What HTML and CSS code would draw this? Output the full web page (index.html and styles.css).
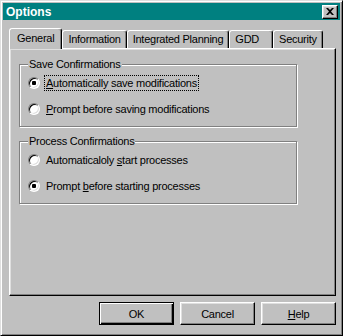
FILE: index.html
```html
<!DOCTYPE html>
<html lang="en">
<head>
  <meta charset="UTF-8" />
  <title>Options</title>
  <link rel="stylesheet" href="styles.css">
</head>
<body>

  <div class="window">
    <div class="titlebar">
      <span class="title">Options</span>
      <button class="close-btn" title="Close">
        <svg width="8" height="7" viewBox="0 0 8 7">
          <path d="M0 0h2l2 2 2-2h2L5 3.5 8 7H6L4 5 2 7H0l3-3.5z" fill="#000"/>
        </svg>
      </button>
    </div>

    <div class="dialog">
      <div class="tabs">
        <div class="tab active">General</div>
        <div class="tab">Information</div>
        <div class="tab">Integrated Planning</div>
        <div class="tab tab-gdd">GDD</div>
        <div class="tab">Security</div>
      </div>

      <div class="panel">
        <div class="group">
          <span class="group-title">Save Confirmations</span>
          <label class="option">
            <input type="radio" name="save" checked>
            <span class="focus"><u>A</u>utomatically save modifications</span>
          </label>
          <label class="option">
            <input type="radio" name="save">
            <span><u>P</u>rompt before saving modifications</span>
          </label>
        </div>

        <div class="group">
          <span class="group-title">Process Confirmations</span>
          <label class="option">
            <input type="radio" name="process">
            <span>Automaticaloly <u>s</u>tart processes</span>
          </label>
          <label class="option">
            <input type="radio" name="process" checked>
            <span>Prompt <u>b</u>efore starting processes</span>
          </label>
        </div>
      </div>

      <div class="buttons">
        <button class="btn default">OK</button>
        <button class="btn">Cancel</button>
        <button class="btn"><u>H</u>elp</button>
      </div>
    </div>
  </div>

</body>
</html>
```

FILE: styles.css
```css
* { margin: 0; padding: 0; box-sizing: border-box; }

body {
  font-family: "Liberation Sans", Arial, sans-serif;
  font-size: 11px;
  letter-spacing: -0.25px;
  color: #000;
  background: #c0c0c0;
}

.window {
  width: 343px;
  height: 336px;
  background: #c0c0c0;
  border: 1px solid;
  border-color: #dfdfdf #000 #000 #dfdfdf;
  box-shadow: inset 1px 1px #fff, inset -1px -1px #808080;
  padding: 2px;
  display: flex;
  flex-direction: column;
}

.titlebar {
  height: 17px;
  background: #008080;
  color: #fff;
  display: flex;
  align-items: center;
  justify-content: space-between;
  padding: 0 2px 0 3px;
}

.title {
  font-weight: bold;
  font-size: 12px;
  letter-spacing: 0;
}

.close-btn {
  width: 16px;
  height: 14px;
  background: #c0c0c0;
  border: 1px solid;
  border-color: #fff #000 #000 #fff;
  box-shadow: inset -1px -1px #808080, inset 1px 1px #dfdfdf;
  display: flex;
  align-items: center;
  justify-content: center;
}

.dialog {
  flex: 1;
  padding: 8px 4px 0 6px;
  display: flex;
  flex-direction: column;
}

.tabs {
  display: flex;
  align-items: flex-end;
  height: 20px;
}

.tab {
  height: 18px;
  line-height: 16px;
  padding: 0 5px;
  border: 1px solid;
  border-bottom: none;
  border-color: #fff #000 transparent #fff;
  border-radius: 3px 3px 0 0;
  box-shadow: inset -1px 0 #808080;
  background: #c0c0c0;
  white-space: nowrap;
}

.tab.active {
  height: 21px;
  line-height: 18px;
  padding: 0 7px;
  margin-bottom: -1px;
  position: relative;
  z-index: 1;
}

.tab-gdd { padding-right: 13px; }

.panel {
  height: 248px;
  border: 1px solid;
  border-color: #fff #000 #000 #fff;
  box-shadow: inset -1px -1px #808080, inset 1px 1px #dfdfdf;
  padding: 15px 0 0 9px;
}

.group {
  position: relative;
  width: 278px;
  border: 1px solid #808080;
  box-shadow: inset 1px 1px #fff, 1px 1px #fff;
  padding: 10px 0 9px 8px;
  display: flex;
  flex-direction: column;
  gap: 10px;
  margin-bottom: 14px;
}

.group-title {
  position: absolute;
  top: -8px;
  left: 8px;
  padding: 0 1px;
  background: #c0c0c0;
  line-height: 14px;
}

.option {
  display: flex;
  align-items: center;
  height: 16px;
  gap: 4px;
}

.option input {
  appearance: none;
  width: 12px;
  height: 12px;
  border-radius: 50%;
  background: #fff;
  border: 1px solid;
  border-color: #808080 #fff #fff #808080;
  box-shadow: inset 1px 1px #000, inset -1px -1px #dfdfdf;
  flex: none;
}

.option input:checked {
  background: radial-gradient(circle, #000 0 2px, #fff 2.5px);
}

.option span {
  padding: 0 1px;
  line-height: 14px;
  border: 1px solid transparent;
}

.option .focus {
  border: 1px dotted #000;
}

.buttons {
  display: flex;
  justify-content: flex-end;
  gap: 6px;
  margin-top: 6px;
}

.btn {
  width: 75px;
  height: 23px;
  font-family: inherit;
  font-size: 11px;
  letter-spacing: inherit;
  color: #000;
  background: #c0c0c0;
  border: 1px solid;
  border-color: #fff #000 #000 #fff;
  box-shadow: inset -1px -1px #808080, inset 1px 1px #dfdfdf;
}

.btn.default {
  border: 1px solid #000;
  box-shadow: inset 1px 1px #fff, inset -1px -1px #000, inset -2px -2px #808080;
}
```
